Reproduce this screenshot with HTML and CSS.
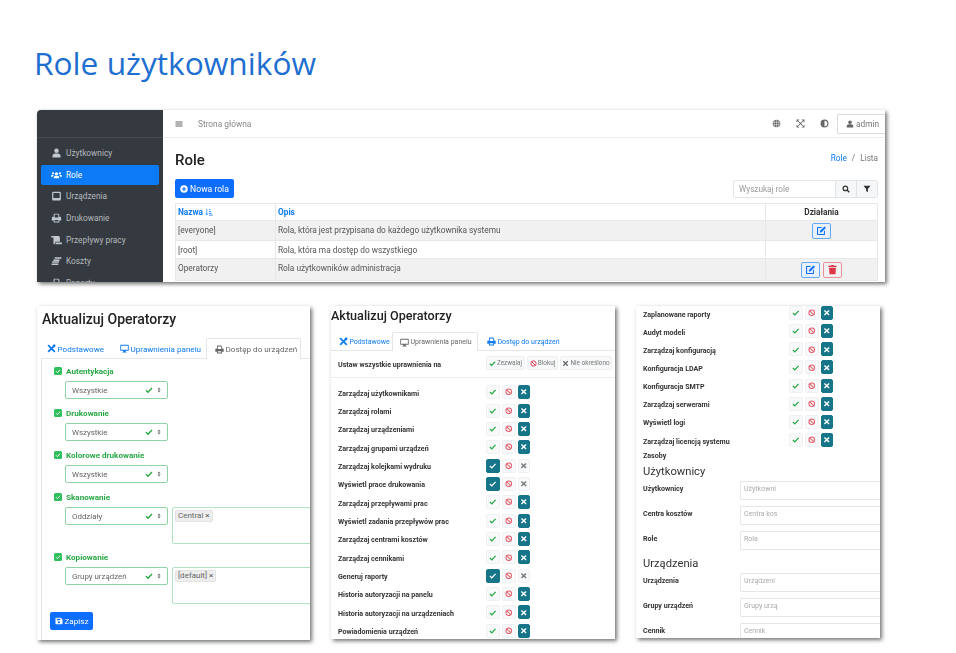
FILE: index.html
```html
<!DOCTYPE html>
<html lang="pl">
<head>
    <meta charset="UTF-8">
    <meta name="viewport" content="width=device-width, initial-scale=1.0">
    <title>Role użytkowników</title>
    <link rel="stylesheet" href="styles.css">
</head>
<body>
  <svg class="sprite" xmlns="http://www.w3.org/2000/svg">
    <symbol id="i-user" viewBox="0 0 16 16"><circle cx="8" cy="4.500" r="3.600" fill="currentColor"/><path d="M1.500 15v-2c0-2.800 2-4.300 4-4.300h5c2 0 4 1.500 4 4.300v2z" fill="currentColor"/></symbol>
    <symbol id="i-users" viewBox="0 0 20 16"><circle cx="10" cy="6" r="3" fill="currentColor"/><circle cx="3.800" cy="5" r="2.100" fill="currentColor"/><circle cx="16.200" cy="5" r="2.100" fill="currentColor"/><path d="M5 14v-1.500c0-1.800 1.200-2.800 2.800-2.800h4.400c1.600 0 2.800 1 2.800 2.800V14zM0 10.500C0 8.800 1 8 2.300 8h2.900c-1 .8-1.600 1.700-1.700 3H0zM20 10.500C20 8.800 19 8 17.700 8h-2.900c1 .8 1.600 1.700 1.700 3H20z" fill="currentColor"/></symbol>
    <symbol id="i-tablet" viewBox="0 0 16 16"><path fill-rule="evenodd" d="M3 1h10a2 2 0 0 1 2 2v10a2 2 0 0 1-2 2H3a2 2 0 0 1-2-2V3a2 2 0 0 1 2-2zm0 2v8h10V3z" fill="currentColor"/></symbol>
    <symbol id="i-print" viewBox="0 0 16 16"><path fill-rule="evenodd" d="M3.500 1H11l1.500 1.500V6h1A2 2 0 0 1 15.500 8v4h-3v3h-9v-3h-3V8a2 2 0 0 1 2-2h1zm1.500 1.500V7h6V3.200L10.300 2.500zM5 11v2.500h6V11z" fill="currentColor"/></symbol>
    <symbol id="i-scroll" viewBox="0 0 18 16"><path d="M1 1.500h11c1.500 0 2.500 1 2.500 2.500v7H7v2c0 1-.7 1.800-1.500 1.800S4 14 4 13V4H1.500C.7 4 0 3.500 0 2.700S.4 1.500 1 1.500zM8 12h10v1.200c0 1-.8 1.800-1.800 1.800H7.200c.5-.6.800-1.200.8-3z" fill="currentColor"/></symbol>
    <symbol id="i-coins" viewBox="0 0 18 16"><path d="M4 5.500h10v2.500H4zM2 8.500h11v2.500H2zM1 12h11v2.500H1zM6 2h11v2.500H6z" fill="currentColor"/></symbol>
    <symbol id="i-tools" viewBox="0 0 16 16"><path d="M1 3.200L3.200 1l11.800 11.800-2.200 2.200z" fill="currentColor"/><path d="M15 3.200L12.800 1 1 12.800 3.200 15z" fill="currentColor"/><circle cx="12.500" cy="3.500" r="2.500" fill="currentColor"/></symbol>
    <symbol id="i-desktop" viewBox="0 0 16 16"><path fill-rule="evenodd" d="M1.500 1.500h13a1 1 0 0 1 1 1v8.500a1 1 0 0 1-1 1H10l.5 2H12v1H4v-1h1.500l.5-2H1.500a1 1 0 0 1-1-1V2.500a1 1 0 0 1 1-1zM2 3v7h12V3z" fill="currentColor"/></symbol>
    <symbol id="i-save" viewBox="0 0 16 16"><path fill-rule="evenodd" d="M2 1.500h9.500L15 5v8a1.500 1.500 0 0 1-1.500 1.500h-11A1.500 1.500 0 0 1 1 13V2.500a1 1 0 0 1 1-1zM3.500 3.500v3h7v-3zM8 8.500a2.200 2.200 0 1 0 0 4.400 2.200 2.200 0 0 0 0-4.400z" fill="currentColor"/></symbol>
    <symbol id="i-check" viewBox="0 0 16 16"><path d="M2 8.500l4 4 8-8.500" fill="none" stroke="currentColor" stroke-width="2.800"/></symbol>
    <symbol id="i-ban" viewBox="0 0 16 16"><circle cx="8" cy="8" r="6" fill="none" stroke="currentColor" stroke-width="2.200"/><path d="M3.800 3.800l8.400 8.400" stroke="currentColor" stroke-width="2.200"/></symbol>
    <symbol id="i-times" viewBox="0 0 16 16"><path d="M3 3l10 10M13 3L3 13" fill="none" stroke="currentColor" stroke-width="3"/></symbol>
    <symbol id="i-globe" viewBox="0 0 16 16"><circle cx="8" cy="8" r="6.800" fill="currentColor"/><path d="M8 1v14M1 5.800h14M1 10.200h14M5 2.200c-1.500 3.500-1.500 8 0 11.600M11 2.200c1.500 3.500 1.500 8 0 11.600" fill="none" stroke="#fff" stroke-width=".8"/></symbol>
    <symbol id="i-expand" viewBox="0 0 16 16"><path d="M4 4l8 8M12 4l-8 8" stroke="currentColor" stroke-width="1.800"/><path d="M1 1h5L1 6zM15 1h-5l5 5zM1 15h5l-5-5zM15 15h-5l5-5z" fill="currentColor"/></symbol>
    <symbol id="i-adjust" viewBox="0 0 16 16"><circle cx="8" cy="8" r="6" fill="none" stroke="currentColor" stroke-width="2"/><path d="M8 2a6 6 0 0 0 0 12z" fill="currentColor"/></symbol>
    <symbol id="i-search" viewBox="0 0 16 16"><circle cx="6.800" cy="6.800" r="4.600" fill="none" stroke="currentColor" stroke-width="2.400"/><path d="M10.200 10.200l4.300 4.300" stroke="currentColor" stroke-width="2.800"/></symbol>
    <symbol id="i-filter" viewBox="0 0 16 16"><path d="M1 1.500h14L9.800 8v6.500L6.200 12V8z" fill="currentColor"/></symbol>
    <symbol id="i-edit" viewBox="0 0 16 16"><path d="M2.500 3H9L7.500 4.500H3v8.500h8.500V9l1.500-1.500v6a1 1 0 0 1-1 1H2.500a1 1 0 0 1-1-1V4a1 1 0 0 1 1-1z" fill="currentColor"/><path d="M6 8.500L12.500 2l2 2L8 10.500 5.500 11z" fill="currentColor"/></symbol>
    <symbol id="i-trash" viewBox="0 0 16 16"><path d="M2 2.500h3.800l.7-1h3l.7 1H14V4.500H2zM3 5.500h10l-.6 8.500a1 1 0 0 1-1 1H4.600a1 1 0 0 1-1-1z" fill="currentColor"/></symbol>
    <symbol id="i-plus" viewBox="0 0 16 16"><circle cx="8" cy="8" r="7.500" fill="currentColor"/><path d="M8 3.800v8.400M3.800 8h8.400" stroke="#0d6efd" stroke-width="2.400"/></symbol>
    <symbol id="i-sort" viewBox="0 0 16 16"><path d="M3.500 1.500v12M1 11l2.500 3L6 11" fill="none" stroke="currentColor" stroke-width="1.400"/><path d="M8 2h2.500v1.500H8zM8 6h4v1.500H8zM8 10h5.500v1.500H8zM8 13.500h7.500V15H8z" fill="currentColor"/></symbol>
    <symbol id="i-bars" viewBox="0 0 16 16"><path d="M1 3h14v2H1zM1 7h14v2H1zM1 11h14v2H1z" fill="currentColor"/></symbol>
    <symbol id="i-updown" viewBox="0 0 8 12"><path d="M4 1l3 4H1zM4 11L1 7h6z" fill="currentColor"/></symbol>
    <symbol id="i-box" viewBox="0 0 16 16"><rect x="0" y="0" width="16" height="16" rx="3" fill="currentColor"/><path d="M4 8.500l2.800 2.800L12 5.500" fill="none" stroke="#fff" stroke-width="2"/></symbol>
  </svg>

  <div class="slide">
    <h1 class="slide-title">Role użytkowników</h1>

    <!-- lista rol -->
    <div class="shot shot-list">
      <aside class="sidebar">
        <div class="brand"></div>
        <a class="nav-item"><svg class="ico"><use href="#i-user"/></svg>Użytkownicy</a>
        <a class="nav-item active"><svg class="ico"><use href="#i-users"/></svg>Role</a>
        <a class="nav-item"><svg class="ico"><use href="#i-tablet"/></svg>Urządzenia</a>
        <a class="nav-item"><svg class="ico"><use href="#i-print"/></svg>Drukowanie</a>
        <a class="nav-item"><svg class="ico"><use href="#i-scroll"/></svg>Przepływy pracy</a>
        <a class="nav-item"><svg class="ico"><use href="#i-coins"/></svg>Koszty</a>
        <a class="nav-item"><svg class="ico"><use href="#i-print"/></svg>Raporty</a>
      </aside>
      <div class="main">
        <div class="topbar">
          <svg class="ico-bars"><use href="#i-bars"/></svg>
          <span class="home-link">Strona główna</span>
          <div class="top-icons">
            <svg class="ico-top"><use href="#i-globe"/></svg>
            <svg class="ico-top"><use href="#i-expand"/></svg>
            <svg class="ico-top"><use href="#i-adjust"/></svg>
          </div>
          <div class="admin-btn"><svg class="ico-admin"><use href="#i-user"/></svg>admin</div>
        </div>
        <div class="content">
          <div class="content-head">
            <h2 class="page-title">Role</h2>
            <div class="crumbs"><span class="link">Role</span><span class="sep">/</span>Lista</div>
          </div>
          <div class="toolbar">
            <button class="btn-primary new-role"><svg class="ico-btn"><use href="#i-plus"/></svg>Nowa rola</button>
            <div class="search">
              <span class="search-input">Wyszukaj role</span>
              <span class="search-btn"><svg class="ico-btn"><use href="#i-search"/></svg></span>
              <span class="search-btn"><svg class="ico-btn"><use href="#i-filter"/></svg></span>
            </div>
          </div>
          <table class="roles">
            <thead>
              <tr class="row-head">
                <th class="col-name"><span class="link">Nazwa</span> <svg class="ico-sort"><use href="#i-sort"/></svg></th>
                <th class="col-desc"><span class="link">Opis</span></th>
                <th class="col-actions">Działania</th>
              </tr>
            </thead>
            <tbody>
              <tr class="row-a odd">
                <td>[everyone]</td>
                <td>Rola, która jest przypisana do każdego użytkownika systemu</td>
                <td class="col-actions"><span class="act act-blue"><svg class="ico-act"><use href="#i-edit"/></svg></span></td>
              </tr>
              <tr class="row-b">
                <td>[root]</td>
                <td>Rola, która ma dostęp do wszystkiego</td>
                <td></td>
              </tr>
              <tr class="row-c odd">
                <td>Operatorzy</td>
                <td>Rola użytkowników administracja</td>
                <td class="col-actions"><span class="act act-blue"><svg class="ico-act"><use href="#i-edit"/></svg></span><span class="act act-red"><svg class="ico-act"><use href="#i-trash"/></svg></span></td>
              </tr>
            </tbody>
          </table>
        </div>
      </div>
    </div>

    <div class="shots-row">
      <!-- dostep do urzadzen -->
      <div class="shot shot-access">
        <h3 class="form-title">Aktualizuj Operatorzy</h3>
        <div class="tabs tabs-access">
          <span class="tab"><svg class="ico-tab"><use href="#i-tools"/></svg>Podstawowe</span>
          <span class="tab"><svg class="ico-tab"><use href="#i-desktop"/></svg>Uprawnienia panelu</span>
          <span class="tab tab-on"><svg class="ico-tab"><use href="#i-print"/></svg>Dostęp do urządzeń</span>
        </div>
        <div class="access-pane">
          <div class="access-group">
            <div class="access-label"><svg class="ico-box"><use href="#i-box"/></svg>Autentykacja</div>
            <div class="select">Wszystkie<svg class="ico-ok"><use href="#i-check"/></svg><svg class="ico-updown"><use href="#i-updown"/></svg></div>
          </div>
          <div class="access-group">
            <div class="access-label"><svg class="ico-box"><use href="#i-box"/></svg>Drukowanie</div>
            <div class="select">Wszystkie<svg class="ico-ok"><use href="#i-check"/></svg><svg class="ico-updown"><use href="#i-updown"/></svg></div>
          </div>
          <div class="access-group">
            <div class="access-label"><svg class="ico-box"><use href="#i-box"/></svg>Kolorowe drukowanie</div>
            <div class="select">Wszystkie<svg class="ico-ok"><use href="#i-check"/></svg><svg class="ico-updown"><use href="#i-updown"/></svg></div>
          </div>
          <div class="access-group group-tall">
            <div class="access-label"><svg class="ico-box"><use href="#i-box"/></svg>Skanowanie</div>
            <div class="select-line">
              <div class="select">Oddziały<svg class="ico-ok"><use href="#i-check"/></svg><svg class="ico-updown"><use href="#i-updown"/></svg></div>
              <div class="tagbox"><span class="tag">Central <b class="tag-x">×</b></span></div>
            </div>
          </div>
          <div class="access-group group-tall">
            <div class="access-label"><svg class="ico-box"><use href="#i-box"/></svg>Kopiowanie</div>
            <div class="select-line">
              <div class="select">Grupy urządzeń<svg class="ico-ok"><use href="#i-check"/></svg><svg class="ico-updown"><use href="#i-updown"/></svg></div>
              <div class="tagbox"><span class="tag">[default] <b class="tag-x">×</b></span></div>
            </div>
          </div>
          <button class="btn-primary save-btn"><svg class="ico-btn"><use href="#i-save"/></svg>Zapisz</button>
        </div>
      </div>

      <!-- uprawnienia panelu -->
      <div class="shot shot-perms">
        <h3 class="form-title">Aktualizuj Operatorzy</h3>
        <div class="tabs tabs-perms">
          <span class="tab"><svg class="ico-tab"><use href="#i-tools"/></svg>Podstawowe</span>
          <span class="tab tab-on"><svg class="ico-tab"><use href="#i-desktop"/></svg>Uprawnienia panelu</span>
          <span class="tab"><svg class="ico-tab"><use href="#i-print"/></svg>Dostęp do urządzeń</span>
        </div>
        <div class="perm-all">
          <span class="perm-name">Ustaw wszystkie uprawnienia na</span>
          <div class="all-btns">
            <span class="all-btn"><svg class="ico-all c-ok"><use href="#i-check"/></svg>Zezwalaj</span>
            <span class="all-btn"><svg class="ico-all c-no"><use href="#i-ban"/></svg>Blokuj</span>
            <span class="all-btn"><svg class="ico-all"><use href="#i-times"/></svg>Nie określono</span>
          </div>
        </div>
        <div class="perm-list">
          <div class="perm"><span class="perm-name">Zarządzaj użytkownikami</span><span class="tri"><i class="t t-ok"><svg><use href="#i-check"/></svg></i><i class="t t-no"><svg><use href="#i-ban"/></svg></i><i class="t t-x on"><svg><use href="#i-times"/></svg></i></span></div>
          <div class="perm"><span class="perm-name">Zarządzaj rolami</span><span class="tri"><i class="t t-ok"><svg><use href="#i-check"/></svg></i><i class="t t-no"><svg><use href="#i-ban"/></svg></i><i class="t t-x on"><svg><use href="#i-times"/></svg></i></span></div>
          <div class="perm"><span class="perm-name">Zarządzaj urządzeniami</span><span class="tri"><i class="t t-ok"><svg><use href="#i-check"/></svg></i><i class="t t-no"><svg><use href="#i-ban"/></svg></i><i class="t t-x on"><svg><use href="#i-times"/></svg></i></span></div>
          <div class="perm"><span class="perm-name">Zarządzaj grupami urządzeń</span><span class="tri"><i class="t t-ok"><svg><use href="#i-check"/></svg></i><i class="t t-no"><svg><use href="#i-ban"/></svg></i><i class="t t-x on"><svg><use href="#i-times"/></svg></i></span></div>
          <div class="perm"><span class="perm-name">Zarządzaj kolejkami wydruku</span><span class="tri"><i class="t t-ok on"><svg><use href="#i-check"/></svg></i><i class="t t-no"><svg><use href="#i-ban"/></svg></i><i class="t t-x"><svg><use href="#i-times"/></svg></i></span></div>
          <div class="perm"><span class="perm-name">Wyświetl prace drukowania</span><span class="tri"><i class="t t-ok on"><svg><use href="#i-check"/></svg></i><i class="t t-no"><svg><use href="#i-ban"/></svg></i><i class="t t-x"><svg><use href="#i-times"/></svg></i></span></div>
          <div class="perm"><span class="perm-name">Zarządzaj przepływami prac</span><span class="tri"><i class="t t-ok"><svg><use href="#i-check"/></svg></i><i class="t t-no"><svg><use href="#i-ban"/></svg></i><i class="t t-x on"><svg><use href="#i-times"/></svg></i></span></div>
          <div class="perm"><span class="perm-name">Wyświetl zadania przepływów prac</span><span class="tri"><i class="t t-ok"><svg><use href="#i-check"/></svg></i><i class="t t-no"><svg><use href="#i-ban"/></svg></i><i class="t t-x on"><svg><use href="#i-times"/></svg></i></span></div>
          <div class="perm"><span class="perm-name">Zarządzaj centrami kosztów</span><span class="tri"><i class="t t-ok"><svg><use href="#i-check"/></svg></i><i class="t t-no"><svg><use href="#i-ban"/></svg></i><i class="t t-x on"><svg><use href="#i-times"/></svg></i></span></div>
          <div class="perm"><span class="perm-name">Zarządzaj cennikami</span><span class="tri"><i class="t t-ok"><svg><use href="#i-check"/></svg></i><i class="t t-no"><svg><use href="#i-ban"/></svg></i><i class="t t-x on"><svg><use href="#i-times"/></svg></i></span></div>
          <div class="perm"><span class="perm-name">Generuj raporty</span><span class="tri"><i class="t t-ok on"><svg><use href="#i-check"/></svg></i><i class="t t-no"><svg><use href="#i-ban"/></svg></i><i class="t t-x"><svg><use href="#i-times"/></svg></i></span></div>
          <div class="perm"><span class="perm-name">Historia autoryzacji na panelu</span><span class="tri"><i class="t t-ok"><svg><use href="#i-check"/></svg></i><i class="t t-no"><svg><use href="#i-ban"/></svg></i><i class="t t-x on"><svg><use href="#i-times"/></svg></i></span></div>
          <div class="perm"><span class="perm-name">Historia autoryzacji na urządzeniach</span><span class="tri"><i class="t t-ok"><svg><use href="#i-check"/></svg></i><i class="t t-no"><svg><use href="#i-ban"/></svg></i><i class="t t-x on"><svg><use href="#i-times"/></svg></i></span></div>
          <div class="perm"><span class="perm-name">Powiadomienia urządzeń</span><span class="tri"><i class="t t-ok"><svg><use href="#i-check"/></svg></i><i class="t t-no"><svg><use href="#i-ban"/></svg></i><i class="t t-x on"><svg><use href="#i-times"/></svg></i></span></div>
        </div>
      </div>

      <!-- dalsza czesc formularza -->
      <div class="shot shot-more">
        <div class="perm-list more-list">
          <div class="perm"><span class="perm-name">Zaplanowane raporty</span><span class="tri"><i class="t t-ok"><svg><use href="#i-check"/></svg></i><i class="t t-no"><svg><use href="#i-ban"/></svg></i><i class="t t-x on"><svg><use href="#i-times"/></svg></i></span></div>
          <div class="perm"><span class="perm-name">Audyt modeli</span><span class="tri"><i class="t t-ok"><svg><use href="#i-check"/></svg></i><i class="t t-no"><svg><use href="#i-ban"/></svg></i><i class="t t-x on"><svg><use href="#i-times"/></svg></i></span></div>
          <div class="perm"><span class="perm-name">Zarządzaj konfiguracją</span><span class="tri"><i class="t t-ok"><svg><use href="#i-check"/></svg></i><i class="t t-no"><svg><use href="#i-ban"/></svg></i><i class="t t-x on"><svg><use href="#i-times"/></svg></i></span></div>
          <div class="perm"><span class="perm-name">Konfiguracja LDAP</span><span class="tri"><i class="t t-ok"><svg><use href="#i-check"/></svg></i><i class="t t-no"><svg><use href="#i-ban"/></svg></i><i class="t t-x on"><svg><use href="#i-times"/></svg></i></span></div>
          <div class="perm"><span class="perm-name">Konfiguracja SMTP</span><span class="tri"><i class="t t-ok"><svg><use href="#i-check"/></svg></i><i class="t t-no"><svg><use href="#i-ban"/></svg></i><i class="t t-x on"><svg><use href="#i-times"/></svg></i></span></div>
          <div class="perm"><span class="perm-name">Zarządzaj serwerami</span><span class="tri"><i class="t t-ok"><svg><use href="#i-check"/></svg></i><i class="t t-no"><svg><use href="#i-ban"/></svg></i><i class="t t-x on"><svg><use href="#i-times"/></svg></i></span></div>
          <div class="perm"><span class="perm-name">Wyświetl logi</span><span class="tri"><i class="t t-ok"><svg><use href="#i-check"/></svg></i><i class="t t-no"><svg><use href="#i-ban"/></svg></i><i class="t t-x on"><svg><use href="#i-times"/></svg></i></span></div>
          <div class="perm"><span class="perm-name">Zarządzaj licencją systemu</span><span class="tri"><i class="t t-ok"><svg><use href="#i-check"/></svg></i><i class="t t-no"><svg><use href="#i-ban"/></svg></i><i class="t t-x on"><svg><use href="#i-times"/></svg></i></span></div>
        </div>
        <div class="perm-name zasoby">Zasoby</div>
        <h4 class="res-title">Użytkownicy</h4>
        <div class="res-row"><span class="perm-name">Użytkownicy</span><span class="res-input">Użytkowni</span></div>
        <div class="res-row"><span class="perm-name">Centra kosztów</span><span class="res-input">Centra kos</span></div>
        <div class="res-row"><span class="perm-name">Role</span><span class="res-input">Rola</span></div>
        <h4 class="res-title">Urządzenia</h4>
        <div class="res-row"><span class="perm-name">Urządzenia</span><span class="res-input">Urządzeni</span></div>
        <div class="res-row"><span class="perm-name">Grupy urządzeń</span><span class="res-input">Grupy urzą</span></div>
        <div class="res-row"><span class="perm-name">Cennik</span><span class="res-input">Cennik</span></div>
      </div>
    </div>
  </div>
</body>
</html>
```

FILE: styles.css
```css
html, body{
    margin: 0;
    padding: 0;
    background: #fff;
}

body{
    font-family: Roboto, "Open Sans", Arial, sans-serif;
    font-size: 8px;
    color: #444;
    overflow: hidden;
}

.sprite{
    display: none;
}

svg{
    display: inline-block;
    flex: none;
}

.slide{
    width: 956px;
    height: 653px;
    overflow: hidden;
}

.slide-title{
    margin: 0;
    padding: 41px 0 0 34px;
    height: 110px;
    box-sizing: border-box;
    font-family: "Open Sans", Arial, sans-serif;
    font-size: 31.700px;
    line-height: 44px;
    font-weight: 400;
    color: #1f6fd1;
}

.shot{
    background: #fff;
    box-shadow: 2px 2px 4px rgba(0,0,0,0.55);
    overflow: hidden;
    filter: blur(0.3px);
}

.link{
    color: #0d7bf2;
}

.btn-primary{
    display: flex;
    align-items: center;
    background: #0d6efd;
    color: #fff;
    border: none;
    border-radius: 2px;
    font-family: inherit;
    font-size: 8.600px;
    padding: 0;
}

/* top window: role list */
.shot-list{
    display: flex;
    width: 848px;
    height: 172px;
    margin-left: 37px;
}

.sidebar{
    width: 126px;
    flex: none;
    background: #343a40;
    border-radius: 4px 0 0 0;
    overflow: hidden;
}

.brand{
    height: 27px;
    border-bottom: 1px solid #444a50;
    margin-bottom: 5px;
}

.nav-item{
    display: flex;
    align-items: center;
    height: 20px;
    margin: 0 4px 1.700px;
    padding-left: 10px;
    border-radius: 2px;
    color: #b4b9be;
    font-size: 8.300px;
}

.nav-item .ico{
    width: 11px;
    height: 10px;
    margin-right: 4px;
    color: #c2c7d0;
}

.nav-item.active{
    background: #0d7bf7;
    color: #fff;
}

.nav-item.active .ico{
    color: #fff;
}

.main{
    flex: 1;
    min-width: 0;
}

.topbar{
    display: flex;
    align-items: center;
    height: 27px;
    border-bottom: 1px solid #e9ecef;
    padding-left: 12px;
}

.ico-bars{
    width: 8px;
    height: 8px;
    color: #666;
}

.home-link{
    margin-left: 15px;
    color: #888;
    font-size: 8.300px;
}

.top-icons{
    display: flex;
    gap: 15px;
    margin-left: auto;
    margin-right: 8px;
}

.ico-top{
    width: 9px;
    height: 9px;
    color: #666;
}

.admin-btn{
    display: flex;
    align-items: center;
    box-sizing: border-box;
    width: 48px;
    height: 20px;
    padding-left: 8px;
    border: 1px solid #ddd;
    border-right: none;
    border-radius: 2px 0 0 2px;
    color: #777;
    font-size: 8.300px;
}

.ico-admin{
    width: 8px;
    height: 8px;
    margin-right: 2px;
    color: #666;
}

.content{
    padding: 0 7px 0 12px;
}

.content-head{
    display: flex;
    justify-content: space-between;
    height: 41px;
}

.page-title{
    margin: 12px 0 0;
    font-size: 15px;
    line-height: 20px;
    font-weight: 500;
    color: #222;
}

.crumbs{
    margin-top: 13px;
    font-size: 8.200px;
    line-height: 14px;
    color: #777;
}

.sep{
    margin: 0 5px;
}

.toolbar{
    display: flex;
    justify-content: space-between;
    height: 24px;
}

.new-role{
    width: 59px;
    height: 19px;
    justify-content: center;
}

.ico-btn{
    width: 8px;
    height: 8px;
    margin-right: 2px;
}

.search{
    display: flex;
    height: 18px;
    margin-top: 1px;
    border: 1px solid #e2e5e8;
    box-sizing: border-box;
    border-radius: 2px;
}

.search-input{
    width: 101px;
    padding-left: 5px;
    box-sizing: border-box;
    line-height: 16px;
    color: #999;
    font-size: 8.200px;
}

.search-btn{
    display: flex;
    align-items: center;
    justify-content: center;
    width: 20px;
    background: #f6f7f8;
    border-left: 1px solid #e2e5e8;
    color: #333;
}

.search-btn .ico-btn{
    margin: 0;
}

.roles{
    width: 703px;
    table-layout: fixed;
    border-collapse: collapse;
    font-size: 8.300px;
    color: #555;
}

.roles th, .roles td{
    border: 1px solid #e6e8ea;
    padding: 0 2px;
    text-align: left;
    font-weight: 400;
}

.roles th{
    font-weight: 700;
    font-size: 8.300px;
    color: #333;
}

.col-name{
    width: 95px;
}

.col-actions{
    width: 107px;
}

.roles .col-actions{
    text-align: center;
}

.row-head{
    height: 17px;
}

.row-a{
    height: 20px;
}

.roles .row-a td:not(.col-actions){
    padding-bottom: 2px;
}

.row-b{
    height: 18px;
}

.row-c{
    height: 22px;
}

.roles .row-c td:not(.col-actions){
    padding-bottom: 3px;
}

.odd{
    background: #f1f1f1;
}

.ico-sort{
    width: 8px;
    height: 8px;
    color: #0d7bf2;
    vertical-align: -1px;
}

.act{
    display: inline-flex;
    align-items: center;
    justify-content: center;
    box-sizing: border-box;
    width: 19px;
    height: 16px;
    margin: 0 1.500px;
    border-radius: 2px;
    vertical-align: middle;
}

.ico-act{
    width: 11px;
    height: 11px;
}

.act-blue{
    border: 1px solid #63a8f7;
    background: #e9f2fc;
    color: #0d6efd;
}

.act-red{
    border: 1px solid #e8909a;
    color: #dc3545;
}

/* form windows */
.shots-row{
    display: flex;
    gap: 21px;
    margin: 24px 0 0 37px;
}

.form-title{
    margin: 0;
    font-weight: 500;
    color: #222;
}

.tabs{
    display: flex;
    color: #0d7bf2;
    border-bottom: 1px solid #e4e6e8;
}

.tab{
    display: flex;
    align-items: center;
    box-sizing: border-box;
    border: 1px solid transparent;
    border-bottom: none;
    white-space: nowrap;
}

.tab-on{
    border-color: #e4e6e8;
    border-radius: 2px 2px 0 0;
    background: #fff;
    color: #666;
    margin-bottom: -1px;
}

.ico-tab{
    width: 9px;
    height: 9px;
    margin-right: 1.500px;
}

/* access */
.shot-access{
    width: 273px;
    height: 334px;
}

.shot-access .form-title{
    padding: 4px 0 0 5px;
    height: 28px;
    font-size: 14px;
    line-height: 18px;
    box-sizing: border-box;
}

.tabs-access{
    height: 20px;
    margin: 4px 0 0 4px;
    padding-left: 4px;
    font-size: 8.100px;
}

.tabs-access .tab:nth-child(1){
    width: 69px;
    padding-left: 1px;
}

.tabs-access .tab:nth-child(2){
    width: 92px;
    padding-left: 5px;
}

.tabs-access .tab:nth-child(3){
    width: 95px;
    padding-left: 8px;
}

.access-pane{
    margin-left: 4px;
    padding: 7px 0 0 12px;
    height: 282px;
    box-sizing: border-box;
    border-left: 1px solid #e4e6e8;
}

.access-group{
    height: 42px;
}

.group-tall{
    height: 60px;
}

.access-label{
    display: flex;
    align-items: center;
    height: 10px;
    color: #28a745;
    font-weight: 700;
    font-size: 8.100px;
    margin-bottom: 5px;
}

.ico-box{
    width: 8px;
    height: 8px;
    margin-right: 4px;
    color: #2fbf5b;
}

.select-line{
    display: flex;
    align-items: flex-start;
    gap: 4px;
    margin-left: 11px;
    width: 260px;
}

.select{
    display: flex;
    align-items: center;
    flex: none;
    box-sizing: border-box;
    width: 103px;
    height: 18px;
    margin-left: 11px;
    padding-left: 6px;
    border: 1px solid #8fd3a4;
    border-radius: 2px;
    color: #666;
    font-size: 7.900px;
}

.select-line .select{
    margin-left: 0;
}

.ico-ok{
    width: 8px;
    height: 8px;
    margin-left: auto;
    color: #28a745;
}

.ico-updown{
    width: 4px;
    height: 6px;
    margin: 0 6px 0 4px;
    color: #666;
}

.tagbox{
    flex: none;
    box-sizing: border-box;
    width: 160px;
    height: 37px;
    padding: 2px;
    border: 1px solid #b3e2c1;
    border-radius: 2px;
}

.tag{
    display: inline-block;
    padding: 0 2px;
    background: #eee;
    border: 1px solid #e2e2e2;
    border-radius: 2px;
    line-height: 10px;
    font-size: 8px;
    color: #666;
}

.tag-x{
    font-weight: 400;
    color: #555;
}

.save-btn{
    justify-content: center;
    width: 43px;
    height: 18px;
    margin-left: -4px;
    font-size: 8.100px;
}

/* permissions */
.shot-perms{
    width: 284px;
    height: 333px;
}

.shot-perms .form-title{
    height: 26px;
    font-size: 12.600px;
    line-height: 19px;
}

.tabs-perms{
    height: 18px;
    padding-left: 7px;
    font-size: 7px;
}

.tabs-perms .tab:nth-child(1){
    width: 54px;
}

.tabs-perms .tab:nth-child(2){
    width: 86px;
    padding-left: 7px;
}

.tabs-perms .tab:nth-child(3){
    width: 80px;
    padding-left: 8px;
}

.perm-all{
    display: flex;
    align-items: center;
    height: 26px;
    padding-left: 7px;
    border-bottom: 1px solid #eceeef;
}

.perm-name{
    font-weight: 700;
    font-size: 7.100px;
    color: #333;
    white-space: nowrap;
}

.perm-all .perm-name, .perm .perm-name{
    width: 148px;
    flex: none;
}

.all-btns{
    display: flex;
    gap: 2px;
    margin-top: -2px;
}

.all-btn{
    display: flex;
    align-items: center;
    justify-content: center;
    height: 14px;
    background: #f8f9fa;
    border: 1px solid #eeeff0;
    box-sizing: border-box;
    border-radius: 2px;
    font-size: 6.400px;
    color: #777;
    white-space: nowrap;
}

.all-btn:nth-child(1){
    width: 39px;
}

.all-btn:nth-child(2){
    width: 31px;
}

.all-btn:nth-child(3){
    width: 52px;
}

.ico-all{
    width: 7px;
    height: 7px;
    margin-right: 1px;
    color: #666;
}

.c-ok{
    color: #28a745;
}

.c-no{
    color: #dc3545;
}

.perm-list{
    padding-top: 6px;
}

.perm{
    display: flex;
    align-items: center;
    height: 18.350px;
    padding-left: 7px;
}

.tri{
    display: flex;
    gap: 2px;
    margin-top: -2px;
}

.t{
    display: flex;
    align-items: center;
    justify-content: center;
    box-sizing: border-box;
    height: 14px;
    background: #f8f9fa;
    border: 1px solid #f0f1f2;
    border-radius: 2px;
}

.t svg{
    width: 7.500px;
    height: 7.500px;
}

.t-ok{
    width: 14px;
    color: #28a745;
}

.t-no{
    width: 14px;
    color: #e4606d;
}

.t-x{
    width: 12px;
    color: #777;
}

.t.on{
    background: #17758a;
    border-color: #17758a;
    color: #fff;
}

/* rest of the form */
.shot-more{
    width: 244px;
    height: 332px;
}

.more-list{
    padding-top: 0;
    margin-top: -1px;
}

.more-list .perm{
    height: 18.150px;
}

.more-list .perm .perm-name{
    width: 146px;
}

.zasoby{
    padding: 0 0 0 7px;
    line-height: 11px;
}

.res-title{
    margin: 3px 0 0;
    padding-left: 7px;
    height: 16px;
    font-size: 11.200px;
    line-height: 16px;
    font-weight: 400;
    color: #333;
}

.res-row + .res-title{
    margin-top: 1px;
}

.res-row{
    display: flex;
    align-items: flex-start;
    height: 25px;
    padding-left: 7px;
}

.res-row .perm-name{
    width: 97px;
    line-height: 16px;
    margin-top: 1px;
    flex: none;
}

.res-input{
    flex: 1;
    height: 19px;
    margin-top: 1px;
    padding-left: 3px;
    box-sizing: border-box;
    border: 1px solid #e4e6e8;
    border-right: none;
    border-radius: 2px 0 0 2px;
    font-size: 7px;
    line-height: 15px;
    color: #aaa;
}
```
